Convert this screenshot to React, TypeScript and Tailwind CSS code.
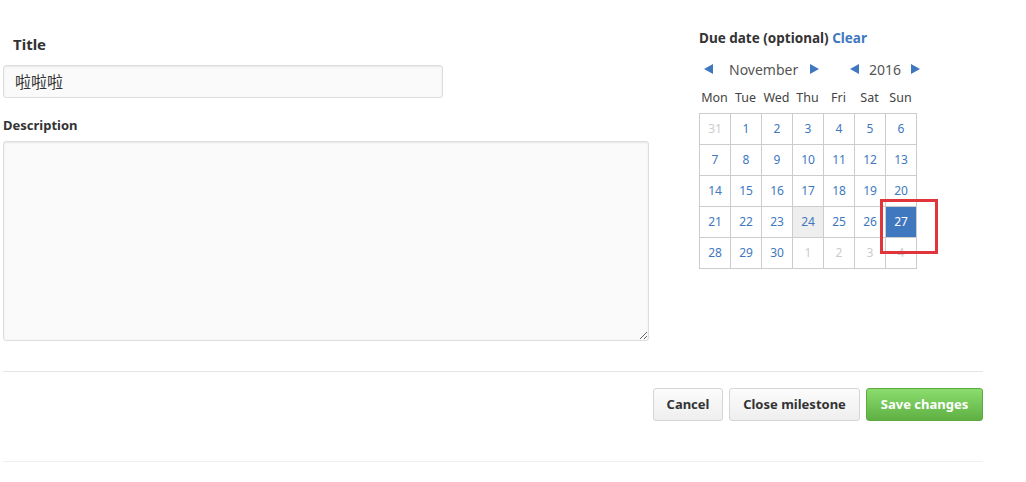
import React from "react";

const font = { fontFamily: '"Segoe UI", "Noto Sans", "Open Sans", "Noto Sans CJK SC", sans-serif' };

const Arrow = ({ dir }: { dir: "l" | "r" }) => (
  <svg width="9" height="10" viewBox="0 0 9 10" className="fill-[#4078c0] shrink-0">
    {dir === "l" ? <polygon points="9,0 9,10 0,5" /> : <polygon points="0,0 0,10 9,5" />}
  </svg>
);

type Day = { n: number; out?: boolean; today?: boolean; sel?: boolean };

const weeks: Day[][] = [
  [{ n: 31, out: true }, { n: 1 }, { n: 2 }, { n: 3 }, { n: 4 }, { n: 5 }, { n: 6 }],
  [{ n: 7 }, { n: 8 }, { n: 9 }, { n: 10 }, { n: 11 }, { n: 12 }, { n: 13 }],
  [{ n: 14 }, { n: 15 }, { n: 16 }, { n: 17 }, { n: 18 }, { n: 19 }, { n: 20 }],
  [{ n: 21 }, { n: 22 }, { n: 23 }, { n: 24, today: true }, { n: 25 }, { n: 26 }, { n: 27, sel: true }],
  [{ n: 28 }, { n: 29 }, { n: 30 }, { n: 1, out: true }, { n: 2, out: true }, { n: 3, out: true }, { n: 4, out: true }],
];

const Calendar = () => (
  <div className="relative">
    <div className="flex items-center h-[22px] text-[14px] text-[#555]">
      <div className="ml-[5px]"><Arrow dir="l" /></div>
      <span className="ml-[16px] w-[81px]">November</span>
      <Arrow dir="r" />
      <div className="ml-[31px]"><Arrow dir="l" /></div>
      <span className="ml-[10px] w-[42px]">2016</span>
      <Arrow dir="r" />
    </div>
    <div className="grid grid-cols-[repeat(7,31px)] text-[12.5px] text-[#444] mt-[7px] h-[22px] items-center">
      {["Mon", "Tue", "Wed", "Thu", "Fri", "Sat", "Sun"].map((d) => (
        <div key={d} className="text-center">{d}</div>
      ))}
    </div>
    <div className="mt-[4px] border-l border-t border-[#ccc] w-[218px]">
      {weeks.map((w, i) => (
        <div key={i} className="flex">
          {w.map((d, j) => (
            <div
              key={j}
              className={
                "w-[31px] h-[31px] border-r border-b border-[#ccc] flex items-center justify-center text-[12px] " +
                (d.sel
                  ? "bg-[#4078c0] text-white"
                  : d.today
                  ? "bg-[#eee] text-[#4078c0]"
                  : d.out
                  ? "text-[#ccc]"
                  : "text-[#4078c0]")
              }
            >
              {d.n}
            </div>
          ))}
        </div>
      ))}
    </div>
    {/* annotation box */}
    <div className="absolute left-[181px] top-[141px] w-[58px] h-[55px] border-[3px] border-[#e0353b]" />
  </div>
);

export default function App() {
  return (
    <div className="bg-white min-h-[482px] w-[1026px]" style={font}>
      <div className="ml-[3px] w-[980px]">
        <div className="flex">
          <div className="w-[646px]">
            <div className="pt-[33px] pl-[10px] text-[15px] font-bold text-[#333] h-[22px] leading-[22px] box-content">Title</div>
            <div className="mt-[10px] w-[440px] h-[33px] border border-[#ddd] rounded-[3px] bg-[#fafafa] shadow-[inset_0_1px_2px_rgba(0,0,0,0.075)] flex items-center pl-[11px] text-[16px] text-[#333]">
              啦啦啦
            </div>
            <div className="mt-[18px] text-[13px] font-bold text-[#333] leading-[18px]">Description</div>
            <textarea
              className="mt-[7px] block w-[646px] h-[200px] border border-[#ddd] rounded-[3px] bg-[#fafafa] shadow-[inset_0_1px_2px_rgba(0,0,0,0.075)] outline-none"
              defaultValue=""
            />
          </div>
          <div className="ml-[50px] pt-[29px]">
            <div className="text-[13.5px] font-bold text-[#333] leading-[18px]">
              Due date (optional) <span className="text-[#4078c0]">Clear</span>
            </div>
            <div className="mt-[11px]">
              <Calendar />
            </div>
          </div>
        </div>
        <div className="mt-[30px] border-t border-[#e5e5e5]" />
        <div className="flex justify-end gap-[6px] mt-[16px]">
          <button className="w-[70px] h-[33px] text-[13px] font-bold text-[#333] border border-[#d5d5d5] rounded-[3px] bg-gradient-to-b from-[#fcfcfc] to-[#eee]">
            Cancel
          </button>
          <button className="w-[131px] h-[33px] text-[13px] font-bold text-[#333] border border-[#d5d5d5] rounded-[3px] bg-gradient-to-b from-[#fcfcfc] to-[#eee]">
            Close milestone
          </button>
          <button className="w-[117px] h-[33px] text-[13px] font-bold text-white border border-[#5ca941] rounded-[3px] bg-gradient-to-b from-[#8add6d] to-[#60b044]">
            Save changes
          </button>
        </div>
        <div className="mt-[40px] border-t border-[#eee]" />
      </div>
    </div>
  );
}
